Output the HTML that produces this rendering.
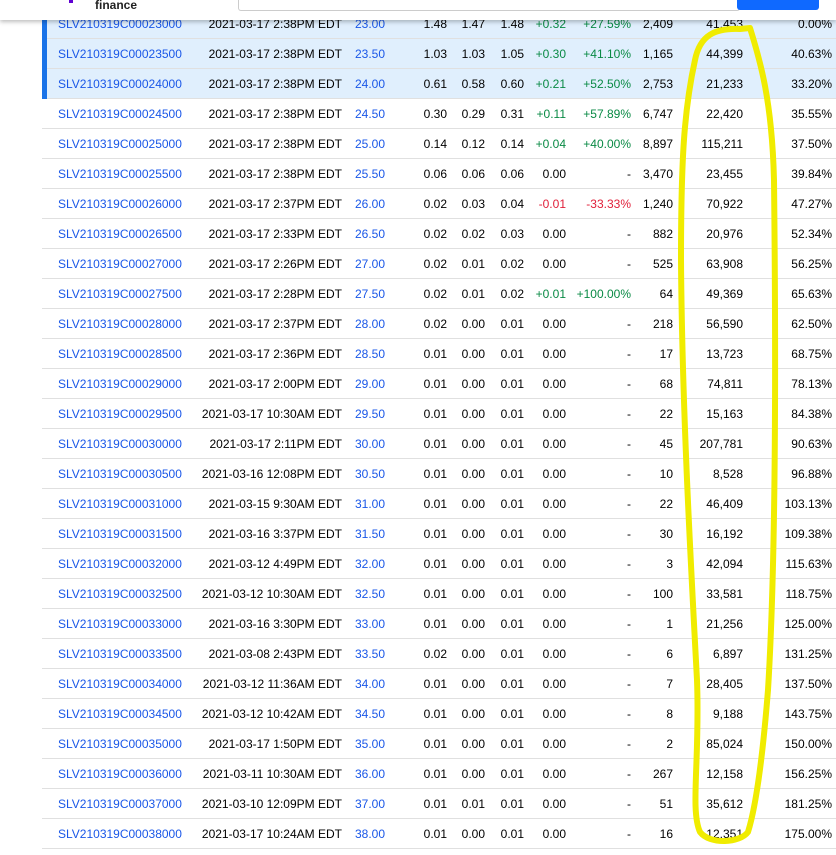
<!DOCTYPE html>
<html><head><meta charset="utf-8"><style>
body{margin:0;width:836px;height:855px;overflow:hidden;background:#fff;font-family:"Liberation Sans",sans-serif;font-size:12px;color:#000;position:relative}
.r{position:absolute;left:42px;width:794px;height:30px;border-bottom:1px solid #e0e0e0;box-sizing:border-box}
.h{background:#e0effd}
.h::before{content:"";position:absolute;left:0;top:0;width:5px;height:30px;background:#1a73e8}
.r span{position:absolute;top:8px;white-space:nowrap}
.b{color:#1a57e8}.g{color:#0a8a45}.d{color:#e0203a}
#hdr{position:absolute;left:0;top:0;width:836px;height:20px;background:#fff;box-shadow:0 2px 4px rgba(0,0,0,.25);z-index:5}
</style></head><body>
<div id="hdr">
<div style="position:absolute;left:69px;top:0;width:4px;height:3px;background:#6001d2"></div>
<div style="position:absolute;left:95px;top:-2px;font-weight:bold;font-size:12px;color:#222">finance</div>
<div style="position:absolute;left:238px;top:-2px;width:500px;height:12px;border:1px solid #ccc;border-top:none;border-radius:0 0 3px 3px"></div>
<div style="position:absolute;left:737px;top:0;width:82px;height:10px;background:#0f69ff;border-radius:0 0 3px 3px"></div>
</div>
<div id="rows"></div>
<svg width="836" height="855" style="position:absolute;left:0;top:0;z-index:6" fill="none">
<path d="M740 29 C715 28 700 35 695 60 C684 110 681 160 681 260 C682 400 690 550 697 680 C700 760 690 810 700 832 C710 845 740 843 748 832 C758 800 764 740 768 690 C776 560 776 360 774 180 C772 100 760 60 750 28 Z" stroke="#f0ec00" stroke-width="6" stroke-linejoin="round"/>
</svg>
<script>
const D=[
["SLV210319C00023000","2021-03-17 2:38PM EDT","23.00","1.48","1.47","1.48","+0.32","+27.59%","2,409","41,453","0.00%"],
["SLV210319C00023500","2021-03-17 2:38PM EDT","23.50","1.03","1.03","1.05","+0.30","+41.10%","1,165","44,399","40.63%"],
["SLV210319C00024000","2021-03-17 2:38PM EDT","24.00","0.61","0.58","0.60","+0.21","+52.50%","2,753","21,233","33.20%"],
["SLV210319C00024500","2021-03-17 2:38PM EDT","24.50","0.30","0.29","0.31","+0.11","+57.89%","6,747","22,420","35.55%"],
["SLV210319C00025000","2021-03-17 2:38PM EDT","25.00","0.14","0.12","0.14","+0.04","+40.00%","8,897","115,211","37.50%"],
["SLV210319C00025500","2021-03-17 2:38PM EDT","25.50","0.06","0.06","0.06","0.00","-","3,470","23,455","39.84%"],
["SLV210319C00026000","2021-03-17 2:37PM EDT","26.00","0.02","0.03","0.04","-0.01","-33.33%","1,240","70,922","47.27%"],
["SLV210319C00026500","2021-03-17 2:33PM EDT","26.50","0.02","0.02","0.03","0.00","-","882","20,976","52.34%"],
["SLV210319C00027000","2021-03-17 2:26PM EDT","27.00","0.02","0.01","0.02","0.00","-","525","63,908","56.25%"],
["SLV210319C00027500","2021-03-17 2:28PM EDT","27.50","0.02","0.01","0.02","+0.01","+100.00%","64","49,369","65.63%"],
["SLV210319C00028000","2021-03-17 2:37PM EDT","28.00","0.02","0.00","0.01","0.00","-","218","56,590","62.50%"],
["SLV210319C00028500","2021-03-17 2:36PM EDT","28.50","0.01","0.00","0.01","0.00","-","17","13,723","68.75%"],
["SLV210319C00029000","2021-03-17 2:00PM EDT","29.00","0.01","0.00","0.01","0.00","-","68","74,811","78.13%"],
["SLV210319C00029500","2021-03-17 10:30AM EDT","29.50","0.01","0.00","0.01","0.00","-","22","15,163","84.38%"],
["SLV210319C00030000","2021-03-17 2:11PM EDT","30.00","0.01","0.00","0.01","0.00","-","45","207,781","90.63%"],
["SLV210319C00030500","2021-03-16 12:08PM EDT","30.50","0.01","0.00","0.01","0.00","-","10","8,528","96.88%"],
["SLV210319C00031000","2021-03-15 9:30AM EDT","31.00","0.01","0.00","0.01","0.00","-","22","46,409","103.13%"],
["SLV210319C00031500","2021-03-16 3:37PM EDT","31.50","0.01","0.00","0.01","0.00","-","30","16,192","109.38%"],
["SLV210319C00032000","2021-03-12 4:49PM EDT","32.00","0.01","0.00","0.01","0.00","-","3","42,094","115.63%"],
["SLV210319C00032500","2021-03-12 10:30AM EDT","32.50","0.01","0.00","0.01","0.00","-","100","33,581","118.75%"],
["SLV210319C00033000","2021-03-16 3:30PM EDT","33.00","0.01","0.00","0.01","0.00","-","1","21,256","125.00%"],
["SLV210319C00033500","2021-03-08 2:43PM EDT","33.50","0.02","0.00","0.01","0.00","-","6","6,897","131.25%"],
["SLV210319C00034000","2021-03-12 11:36AM EDT","34.00","0.01","0.00","0.01","0.00","-","7","28,405","137.50%"],
["SLV210319C00034500","2021-03-12 10:42AM EDT","34.50","0.01","0.00","0.01","0.00","-","8","9,188","143.75%"],
["SLV210319C00035000","2021-03-17 1:50PM EDT","35.00","0.01","0.00","0.01","0.00","-","2","85,024","150.00%"],
["SLV210319C00036000","2021-03-11 10:30AM EDT","36.00","0.01","0.00","0.01","0.00","-","267","12,158","156.25%"],
["SLV210319C00037000","2021-03-10 12:09PM EDT","37.00","0.01","0.01","0.01","0.00","-","51","35,612","181.25%"],
["SLV210319C00038000","2021-03-17 10:24AM EDT","38.00","0.01","0.00","0.01","0.00","-","16","12,351","175.00%"]];
const R=[null,300,null,405,443,482,524,589,631,701,790];
let h="";
D.forEach((d,i)=>{
let top=9+30*i;
let cls=i<3?"r h":"r";
let c=d[6].startsWith("+")?"g":d[6].startsWith("-")&&d[6]!="-"?"d":"";
let s=`<div class="${cls}" style="top:${top}px">`;
s+=`<span class="b" style="left:16px">${d[0]}</span>`;
s+=`<span style="right:${794-R[1]}px">${d[1]}</span>`;
s+=`<span class="b" style="left:313px">${d[2]}</span>`;
for(let k=3;k<=10;k++){let cc=(k==6||k==7)?c:"";s+=`<span class="${cc}" style="right:${794-R[k]}px">${d[k]}</span>`;}
s+="</div>";h+=s;});
document.getElementById("rows").innerHTML=h;
</script>
</body></html>
